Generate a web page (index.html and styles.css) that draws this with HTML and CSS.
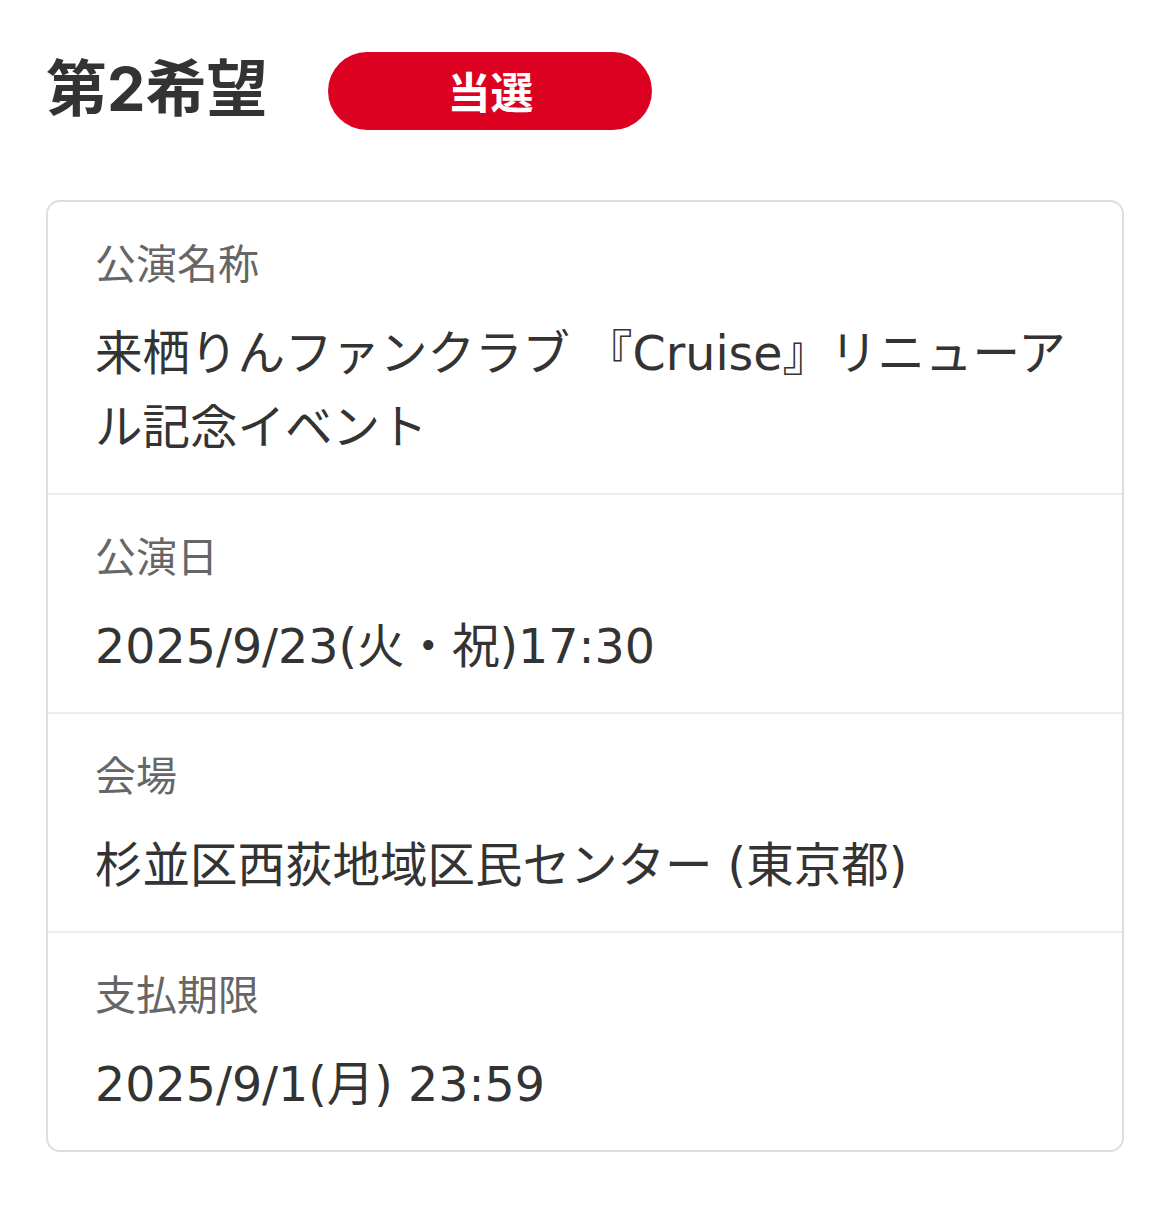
FILE: index.html
```html
<!DOCTYPE html>
<html lang="ja">
<head>
  <meta charset="UTF-8">
  <meta name="viewport" content="width=device-width, initial-scale=1.0">
  <title>第2希望</title>
  <link rel="stylesheet" href="styles.css">
</head>
<body>

<div class="wish">
  <!-- Heading with result badge -->
  <div class="wish-head">
    <h2 class="wish-title">第2希望</h2>
    <span class="badge">当選</span>
  </div>

  <!-- Detail card -->
  <div class="detail-card">
    <div class="detail-row">
      <div class="detail-label">公演名称</div>
      <div class="detail-value">来栖りんファンクラブ 『Cruise』リニューアル記念イベント</div>
    </div>
    <div class="detail-row">
      <div class="detail-label">公演日</div>
      <div class="detail-value">2025/9/23(火・祝)17:30</div>
    </div>
    <div class="detail-row">
      <div class="detail-label">会場</div>
      <div class="detail-value">杉並区西荻地域区民センター (東京都)</div>
    </div>
    <div class="detail-row">
      <div class="detail-label">支払期限</div>
      <div class="detail-value">2025/9/1(月) 23:59</div>
    </div>
  </div>
</div>

</body>
</html>
```

FILE: styles.css
```css
body {
  margin: 0;
  background-color: #fff;
  color: #333;
  font-family: Inter, "Noto Sans CJK JP", sans-serif;
}

.wish {
  padding: 52px 46px 0 46px;
}

/* Heading row */
.wish-head {
  display: flex;
  align-items: center;
  gap: 61px;
  height: 78px;
}

.wish-title {
  margin: -4px 0 0 0;
  font-size: 61px;
  font-weight: 700;
  line-height: 78px;
  color: #333;
}

.badge {
  display: flex;
  justify-content: center;
  align-items: center;
  width: 324px;
  height: 78px;
  border-radius: 39px;
  background-color: #dc0021;
  color: #fff;
  font-size: 43px;
  font-weight: 700;
  padding-bottom: 3px;
  box-sizing: border-box;
}

/* Card */
.detail-card {
  margin-top: 70px;
  border: 2px solid #dedede;
  border-radius: 14px;
  width: 1074px;
}

.detail-row {
  padding: 32px 47px 28px 47px;
  border-top: 2px solid #ececec;
}

.detail-row:first-child {
  border-top: none;
}

.detail-label {
  font-size: 41px;
  line-height: 60px;
  color: #666;
}

/* wide latin digits, CJK falls back to Noto */
.detail-value {
  margin-top: 23px;
  font-family: "DejaVu Sans", "Noto Sans CJK JP", sans-serif;
  font-size: 47.5px;
  line-height: 74px;
  color: #333;
}
```
